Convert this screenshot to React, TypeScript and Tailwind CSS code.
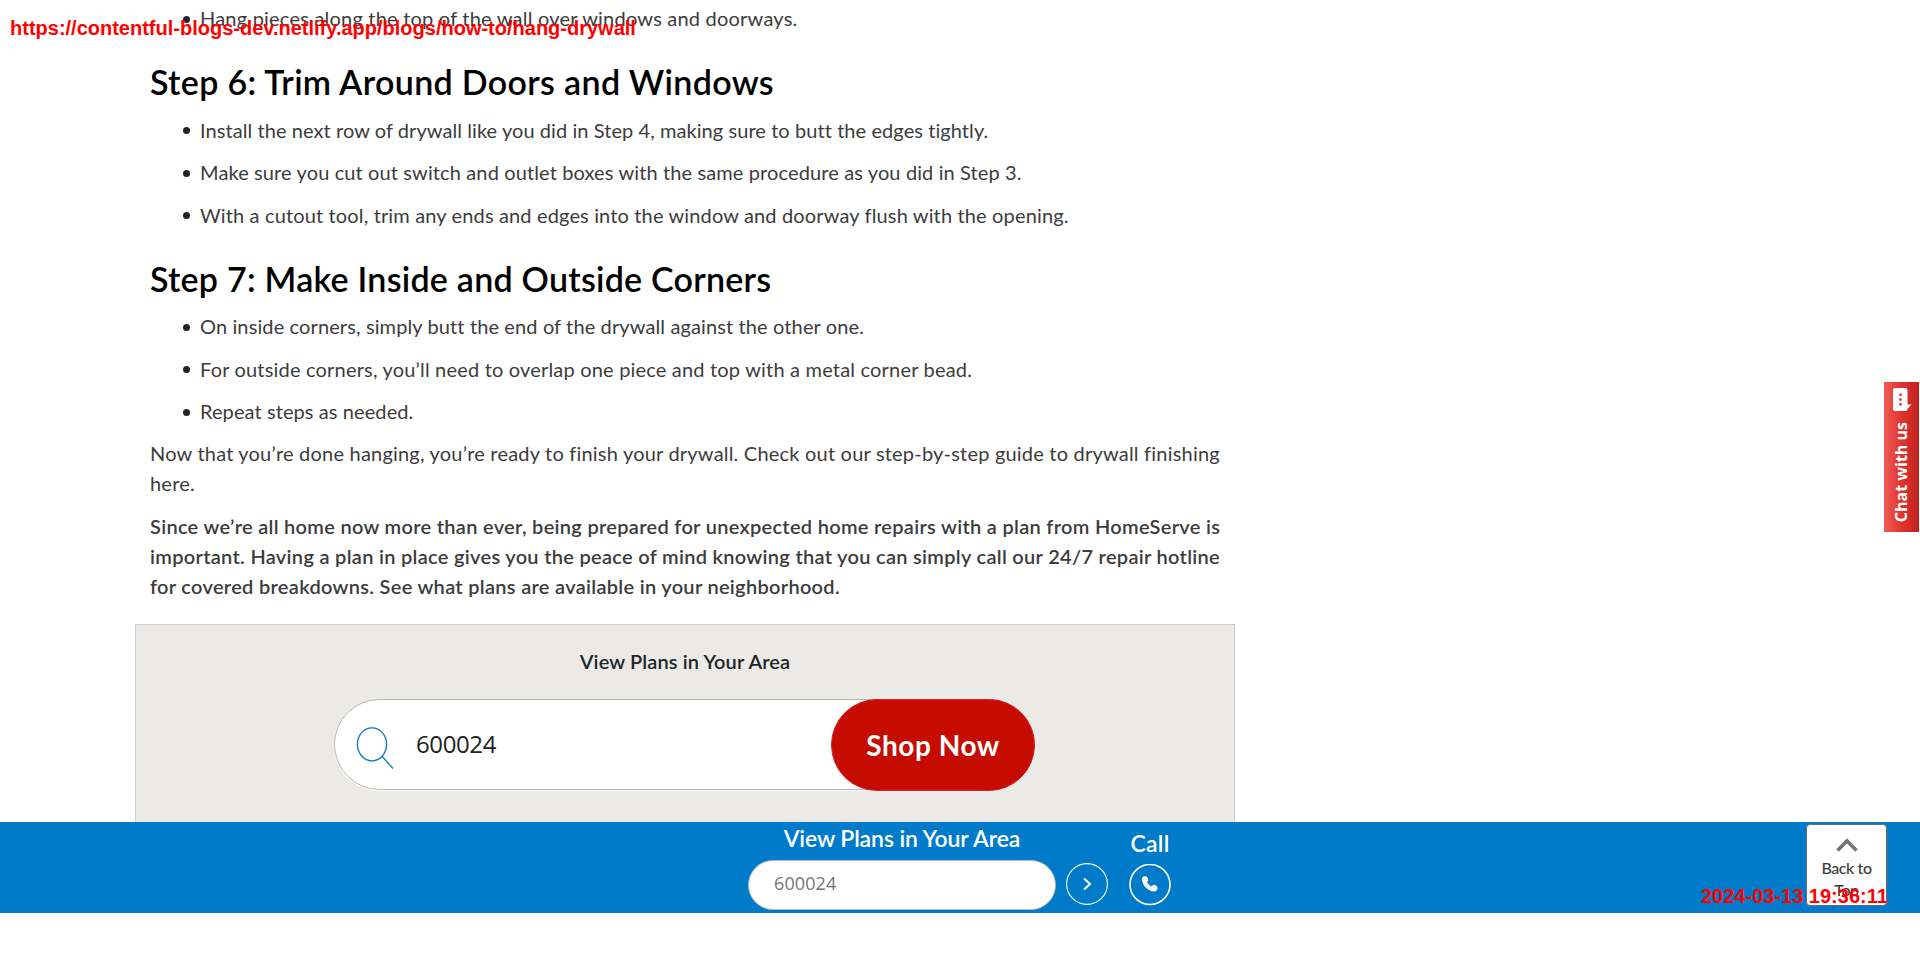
import type { ReactNode } from "react";

type Line = { text: string; spacing: string };

const stepFive: Line[] = [
  { text: "Hang pieces along the top of the wall over windows and doorways.", spacing: "tracking-[0.21px]" },
];

const stepSix: Line[] = [
  {
    text: "Install the next row of drywall like you did in Step 4, making sure to butt the edges tightly.",
    spacing: "tracking-[0.07px]",
  },
  {
    text: "Make sure you cut out switch and outlet boxes with the same procedure as you did in Step 3.",
    spacing: "tracking-[0.118px]",
  },
  {
    text: "With a cutout tool, trim any ends and edges into the window and doorway flush with the opening.",
    spacing: "tracking-[0.145px]",
  },
];

const stepSeven: Line[] = [
  { text: "On inside corners, simply butt the end of the drywall against the other one.", spacing: "tracking-[0.118px]" },
  {
    text: "For outside corners, you’ll need to overlap one piece and top with a metal corner bead.",
    spacing: "tracking-[0.187px]",
  },
  { text: "Repeat steps as needed.", spacing: "tracking-[0.09px]" },
];

function Steps({ items }: { items: Line[] }) {
  return (
    <ul>
      {items.map((item) => (
        <li key={item.text} className="mb-[12.5px] flex items-center pl-[33px]">
          <span className="mt-[2px] mr-[10px] size-[7px] shrink-0 rounded-full bg-[#212529]" />
          <span className={`whitespace-nowrap ${item.spacing}`}>{item.text}</span>
        </li>
      ))}
    </ul>
  );
}

function StepHeading({ spacing, children }: { spacing: string; children: ReactNode }) {
  return (
    <h2 className={`mb-[12.6px] pt-[16.5px] text-[34px] leading-10 font-semibold whitespace-nowrap text-black ${spacing}`}>
      {children}
    </h2>
  );
}

function PlanSearch() {
  return (
    <section className="mt-[23px] -ml-[15px] h-[220px] w-[1100px] border border-[#cdced0] bg-[#ebeae6] pt-[21px]">
      <h3 className="text-center text-[20px] leading-[30px] font-semibold tracking-[0.12px] text-[#212529]">
        View Plans in Your Area
      </h3>
      <div className="mt-[23px] ml-[198px] flex h-[91px] w-[701px] items-center rounded-full border border-[#b9b9ba] bg-white shadow-[0_1px_0_#fff]">
        <svg className="mt-[8px] ml-[20px] h-[44px] w-[40px] shrink-0" viewBox="0 0 40 44" fill="none" stroke="#0c7bc2" strokeWidth="1.3">
          <ellipse cx="17" cy="18.3" rx="14.6" ry="16.5" />
          <path d="M27 30.3 38 42.5" />
        </svg>
        <span className="ml-[21px] flex-1 font-['Open_Sans',sans-serif] text-[24px] tracking-[-0.39px] text-[#212121]">
          600024
        </span>
        <button
          type="button"
          className="mt-[2px] -mr-[1px] h-[92px] w-[204px] shrink-0 rounded-full border border-[#d6202f] bg-[#c60c00] text-[28px] font-bold tracking-[0.55px] text-white"
        >
          Shop Now
        </button>
      </div>
    </section>
  );
}

function BottomBar() {
  return (
    <div className="flex h-[91px] bg-[#007bc9] pl-[748px] text-white">
      <div className="w-[308px]">
        <div className="flex h-[38px] items-start justify-center text-[23px] leading-[32px] font-semibold tracking-[-0.1px] whitespace-nowrap">
          View Plans in Your Area
        </div>
        <div className="flex h-[50px] items-center rounded-full border border-[#b9b9ba] bg-white pb-[3px] pl-[25px] font-['Open_Sans',sans-serif] text-[18px] tracking-[0.1px] text-[#757575]">
          600024
        </div>
      </div>
      <svg className="mt-[41px] ml-[10px] size-[42px]" viewBox="0 0 42 42" fill="none" stroke="#fff">
        <circle cx="21" cy="21" r="20.4" strokeWidth="1.1" />
        <path d="m18 15.4 6 5.6-6 5.6" strokeWidth="2" />
      </svg>
      <div className="ml-[21px] flex w-[42px] flex-col items-center">
        <span className="mt-[6px] text-[23px] leading-[31px] font-semibold tracking-[0.25px]">Call</span>
        <svg className="mt-[5px] size-[42px]" viewBox="0 0 42 42" fill="none" stroke="#fff">
          <circle cx="21" cy="20.5" r="20" strokeWidth="1.6" />
          <path
            d="M13 16.2c-.5-2.200.7-4 2.800-4 2 0 3.400 1.500 3.400 3.200 0 1.100-.5 1.800-1.200 2.300.6 1.900 2.700 3.900 4.700 4.700.7-.8 1.600-1.300 2.600-1.300 1.800 0 3.200 1.500 3.200 3.200s-1.500 3.200-3.500 3.200c-5.400-.3-11.200-5.500-12-11.300Z"
            fill="#fff"
            stroke="none"
          />
        </svg>
      </div>
    </div>
  );
}

export default function App() {
  return (
    <div className="relative h-[963px] w-full overflow-hidden bg-white font-['Lato',sans-serif]">
      <main className="h-[822px] overflow-hidden pt-[3px] pl-[150px] text-[20px] leading-[30px] text-[#3c3c3c]">
        <Steps items={stepFive} />
        <StepHeading spacing="tracking-[0.33px]">Step 6: Trim Around Doors and Windows</StepHeading>
        <Steps items={stepSix} />
        <StepHeading spacing="tracking-[0.24px]">Step 7: Make Inside and Outside Corners</StepHeading>
        <Steps items={stepSeven} />
        <p className="-mt-[0.6px] mb-[12.600px] whitespace-nowrap tracking-[0.205px]">
          Now that you’re done hanging, you’re ready to finish your drywall. Check out our step-by-step guide to drywall finishing
          <br />
          here.
        </p>
        <p className="font-semibold whitespace-nowrap tracking-[0.298px]">
          Since we’re all home now more than ever, being prepared for unexpected home repairs with a plan from HomeServe is
          <br />
          important. Having a plan in place gives you the peace of mind knowing that you can simply call our 24/7 repair hotline
          <br />
          for covered breakdowns. See what plans are available in your neighborhood.
        </p>
        <PlanSearch />
      </main>
      <BottomBar />

      <div className="absolute top-[382px] left-[1884px] flex h-[150px] w-[35px] flex-col items-center bg-linear-to-r from-[#ee5a55] via-[#e0332f] to-[#bf2420] text-white">
        <svg className="mt-[6px] ml-px h-[24px] w-[20px] shrink-0" viewBox="0 0 20 24" fill="#fff">
          <path d="M3 0h10.500a2 2 0 0 1 2 2v14.500l4 0-4 4.300V21a2 2 0 0 1-2 2H3a2 2 0 0 1-2-2V2a2 2 0 0 1 2-2Z" />
          <path d="M7.300 5.500h2.400v2.400H7.300zM7.300 10.300h2.400v2.400H7.300zM7.300 15.100h2.400v2.400H7.300z" fill="#dd3833" />
        </svg>
        <span className="mt-[10px] mr-[2px] rotate-180 font-['Open_Sans',sans-serif] text-[16px] leading-[20px] font-bold whitespace-nowrap [writing-mode:vertical-rl]">
          Chat with us
        </span>
      </div>

      <div className="absolute top-[824px] left-[1806px] flex h-[82px] w-[81px] flex-col items-center rounded-[4px] border border-[#6c6c6c] bg-white text-[16px] leading-[22px] font-medium tracking-[-0.4px] text-[#3c3c3c]">
        <svg className="mt-[13px] mb-[5px] h-[14px] w-[22px] shrink-0" viewBox="0 0 22 14" fill="none" stroke="#757575" strokeWidth="3.6">
          <path d="m1.500 12.500 9.500-9.700 9.500 9.700" />
        </svg>
        <span>Back to</span>
        <span>Top</span>
      </div>

      <div className="absolute top-[16px] left-[10px] font-['Liberation_Sans',sans-serif] text-[20px] leading-[24px] font-bold whitespace-nowrap text-[#ff0000]">
        https://contentful-blogs-dev.netlify.app/blogs/how-to/hang-drywall
      </div>
      <div className="absolute top-[884px] left-[1701px] font-['Liberation_Sans',sans-serif] text-[20px] leading-[24px] font-bold whitespace-nowrap text-[#ff0000]">
        2024-03-13 19:36:11
      </div>
    </div>
  );
}
